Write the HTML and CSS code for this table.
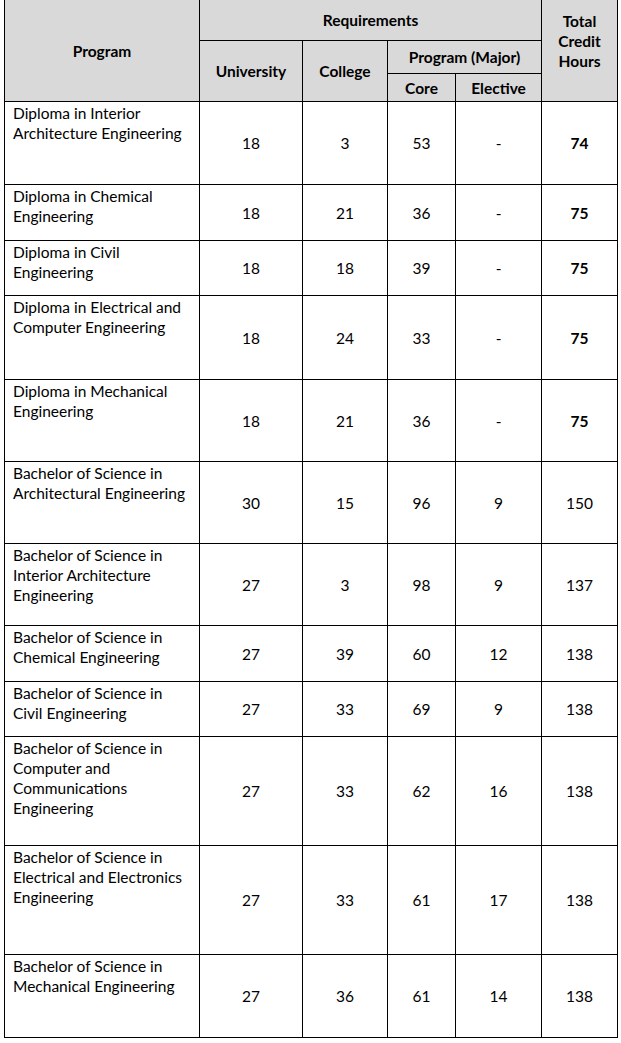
FILE: index.html
```html
<!DOCTYPE html>
<html>
<head>
<meta charset="utf-8">
<link rel="stylesheet" href="styles.css">
</head>
<body>
<table class="plan">
  <colgroup>
    <col class="c-prog"><col class="c-uni"><col class="c-col"><col class="c-core"><col class="c-elec"><col class="c-tot">
  </colgroup>
  <thead>
    <tr class="h1">
      <th rowspan="3" class="mid">Program</th>
      <th colspan="4">Requirements</th>
      <th rowspan="3" class="tot">Total<br>Credit<br>Hours</th>
    </tr>
    <tr class="h2">
      <th rowspan="2">University</th>
      <th rowspan="2">College</th>
      <th colspan="2">Program (Major)</th>
    </tr>
    <tr class="h3">
      <th>Core</th>
      <th>Elective</th>
    </tr>
  </thead>
  <tbody>
    <tr class="r83"><td class="name">Diploma in Interior<br>Architecture Engineering</td><td>18</td><td>3</td><td>53</td><td>-</td><td class="b">74</td></tr>
    <tr class="r56"><td class="name">Diploma in Chemical<br>Engineering</td><td>18</td><td>21</td><td>36</td><td>-</td><td class="b">75</td></tr>
    <tr class="r55"><td class="name">Diploma in Civil<br>Engineering</td><td>18</td><td>18</td><td>39</td><td>-</td><td class="b">75</td></tr>
    <tr class="r84"><td class="name">Diploma in Electrical and<br>Computer Engineering</td><td>18</td><td>24</td><td>33</td><td>-</td><td class="b">75</td></tr>
    <tr class="r82"><td class="name">Diploma in Mechanical<br>Engineering</td><td>18</td><td>21</td><td>36</td><td>-</td><td class="b">75</td></tr>
    <tr class="r82"><td class="name">Bachelor of Science in<br>Architectural Engineering</td><td>30</td><td>15</td><td>96</td><td>9</td><td>150</td></tr>
    <tr class="r82"><td class="name">Bachelor of Science in<br>Interior Architecture<br>Engineering</td><td>27</td><td>3</td><td>98</td><td>9</td><td>137</td></tr>
    <tr class="r56"><td class="name">Bachelor of Science in<br>Chemical Engineering</td><td>27</td><td>39</td><td>60</td><td>12</td><td>138</td></tr>
    <tr class="r55"><td class="name">Bachelor of Science in<br>Civil Engineering</td><td>27</td><td>33</td><td>69</td><td>9</td><td>138</td></tr>
    <tr class="r109"><td class="name">Bachelor of Science in<br>Computer and<br>Communications<br>Engineering</td><td>27</td><td>33</td><td>62</td><td>16</td><td>138</td></tr>
    <tr class="r109"><td class="name">Bachelor of Science in<br>Electrical and Electronics<br>Engineering</td><td>27</td><td>33</td><td>61</td><td>17</td><td>138</td></tr>
    <tr class="r83"><td class="name">Bachelor of Science in<br>Mechanical Engineering</td><td>27</td><td>36</td><td>61</td><td>14</td><td>138</td></tr>
  </tbody>
</table>
</body>
</html>
```

FILE: styles.css
```css
html, body {
  margin: 0;
  padding: 0;
  background: #ffffff;
}

body {
  font-family: Lato, "Liberation Sans", sans-serif;
  font-size: 15.5px;
  line-height: 20px;
  color: #000;
}

.plan {
  border-collapse: collapse;
  table-layout: fixed;
  width: 613px;
  margin: -1px 0 0 4px;
}

.c-prog { width: 195px; }
.c-uni { width: 103px; }
.c-col { width: 85px; }
.c-core { width: 68px; }
.c-elec { width: 86px; }
.c-tot { width: 76px; }

.plan th,
.plan td {
  border: 1px solid #000;
  padding: 0;
  text-align: center;
  vertical-align: middle;
}

.plan th {
  background: #d9d9d9;
  font-weight: 700;
}

.h1 { height: 41px; }
.h2 { height: 33px; }
.h3 { height: 28px; }

.plan th.tot {
  vertical-align: top;
  padding-top: 11px;
}

.plan td.name {
  text-align: left;
  vertical-align: top;
  padding: 1px 0 0 8px;
}

.plan td.b { font-weight: 700; }

.r55 { height: 55px; }
.r56 { height: 56px; }
.r82 { height: 82px; }
.r83 { height: 83px; }
.r84 { height: 84px; }
.r109 { height: 109px; }
```
